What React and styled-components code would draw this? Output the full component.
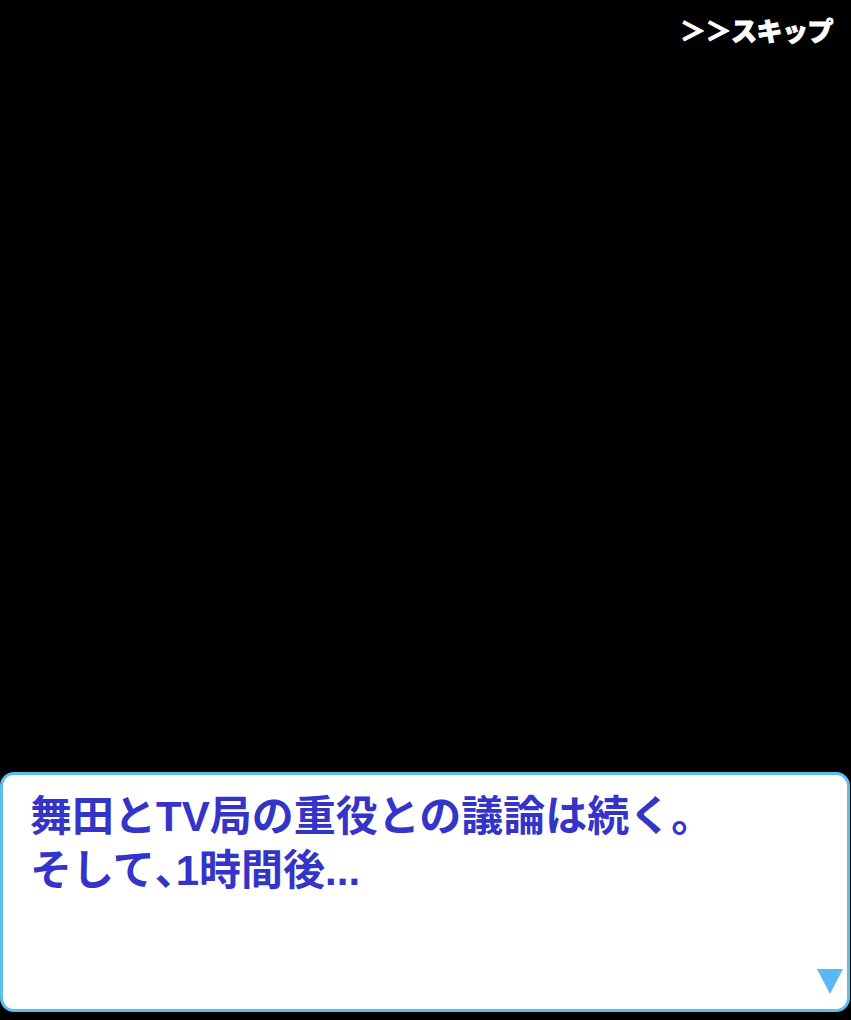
import React from 'react'
import styled, { createGlobalStyle } from 'styled-components'

const GlobalStyle = createGlobalStyle`
    html, body {
        margin: 0;
        padding: 0;
        background-color: #000;
    }
    * {
        box-sizing: border-box;
    }
`

const Screen = styled.div`
    display: flex;
    flex-direction: column;
    width: 851px;
    height: 1020px;
    background-color: #000;
    font-family: "Liberation Sans", "Noto Sans CJK JP", sans-serif;
    overflow: hidden;
`

const TopBar = styled.div`
    display: flex;
    justify-content: flex-end;
    padding: 12px 18px 0 0;
    height: 60px;
`

const SkipBtn = styled.button`
    background: none;
    border: none;
    padding: 0;
    color: #fff;
    font-family: "Noto Sans CJK JP", sans-serif;
    font-weight: 900;
    font-size: 26px;
    line-height: 36px;
    letter-spacing: -0.5px;
    height: 36px;
    -webkit-text-stroke: 0.8px #fff;
    cursor: pointer;
`

const Scene = styled.div`
    flex: 1;
`

const MessageBox = styled.div`
    position: relative;
    height: 240px;
    margin: 0 1px 8px 0;
    background-color: #fff;
    border: 3px solid #5cbdf0;
    border-radius: 14px;
    padding: 17px 27px;
`

const Message = styled.p`
    margin: 0;
    color: #3434c8;
    font-family: "Liberation Sans", "Noto Sans CJK JP", sans-serif;
    font-weight: 700;
    font-size: 42px;
    line-height: 50px;
`

const Punct = styled.span`
    font-family: "Noto Sans CJK JP", sans-serif;
    font-feature-settings: "halt";
`

const NextMark = styled.div`
    position: absolute;
    right: 4px;
    bottom: 15px;
    width: 0;
    height: 0;
    border-left: 13.5px solid transparent;
    border-right: 13.5px solid transparent;
    border-top: 25px solid #5ab9f4;
`

export default function App() {
    return (
        <Screen>
            <GlobalStyle />
            <TopBar>
                <SkipBtn>＞＞スキップ</SkipBtn>
            </TopBar>
            <Scene />
            <MessageBox>
                <Message>
                    舞田とTV局の重役との議論は続く。<br />
                    そして<Punct>、</Punct>1時間後...
                </Message>
                <NextMark />
            </MessageBox>
        </Screen>
    )
}
